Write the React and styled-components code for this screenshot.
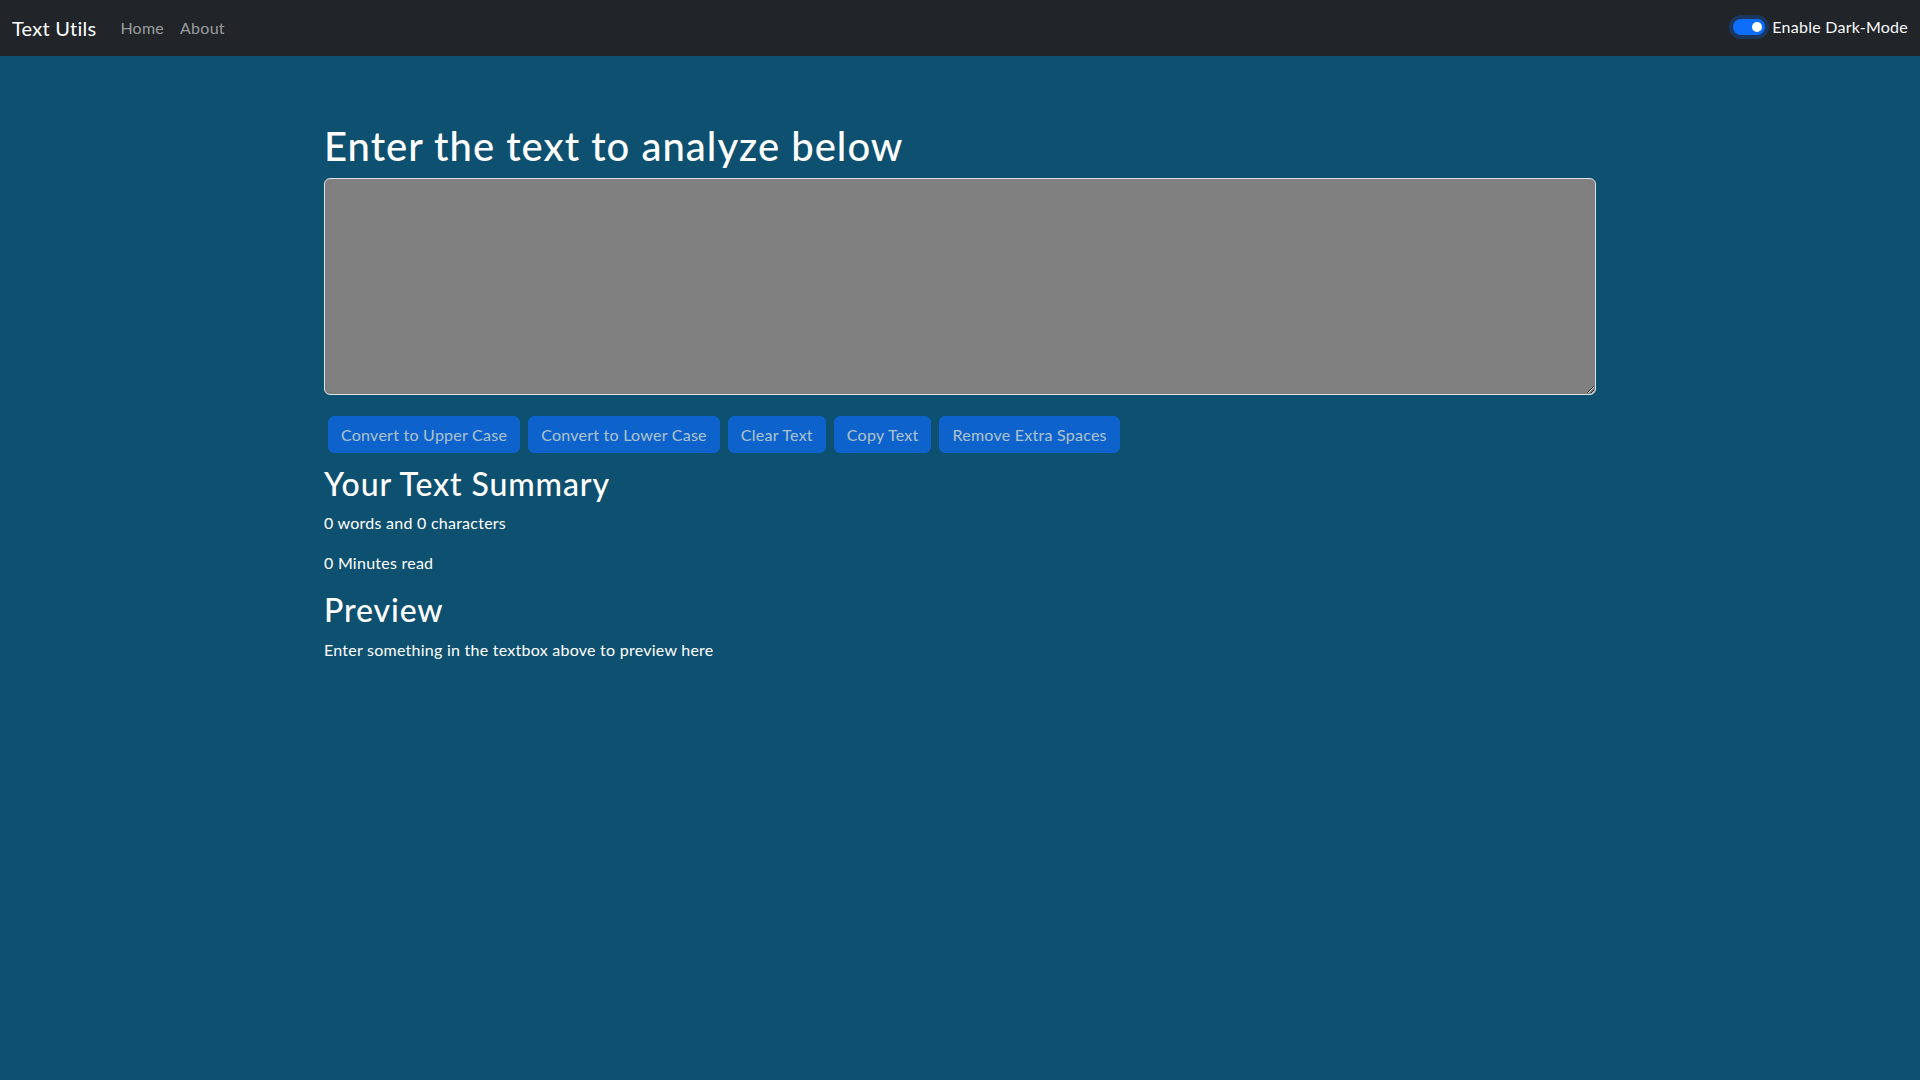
import React, { useState } from "react";
import styled, { createGlobalStyle } from "styled-components";

const GlobalStyle = createGlobalStyle`
  * { box-sizing: border-box; }
  body {
    margin: 0;
    background: #0e506f;
    color: #fff;
    font-family: Lato, "Noto Sans", sans-serif;
    font-size: 16px;
    line-height: 1.5;
    letter-spacing: 0.25px;
  }
`;

const Nav = styled.nav`
  height: 56px;
  background: #212529;
  display: flex;
  align-items: center;
  justify-content: space-between;
  padding: 0 12px;
`;

const Left = styled.div`
  display: flex;
  align-items: center;
`;

const Brand = styled.a`
  font-size: 20px;
  color: #fff;
  text-decoration: none;
  margin-right: 16px;
`;

const NavLink = styled.a`
  color: rgba(255, 255, 255, 0.55);
  text-decoration: none;
  padding: 8px;
`;

const Switch = styled.label`
  display: flex;
  align-items: center;
  gap: 7px;
  color: #f8f9fa;
  margin-bottom: 3px;
`;

const Track = styled.span`
  width: 32px;
  height: 16px;
  border-radius: 8px;
  background: #0d6efd;
  box-shadow: 0 0 0 4px rgba(13, 110, 253, 0.25);
  display: flex;
  align-items: center;
  justify-content: ${(p) => (p.on ? "flex-end" : "flex-start")};
  padding: 0 3px;
`;

const Knob = styled.span`
  width: 10px;
  height: 10px;
  border-radius: 50%;
  background: #fff;
`;

const Spacer = styled.div`
  height: 50px;
`;

const Container = styled.div`
  max-width: 1296px;
  margin: 16px auto;
  padding: 0 12px;
`;

const H1 = styled.h1`
  font-size: 40px;
  font-weight: 500;
  line-height: 1.2;
  letter-spacing: 1px;
  margin: 0 0 8px;
`;

const H2 = styled.h2`
  font-size: 32px;
  font-weight: 500;
  line-height: 1.2;
  letter-spacing: 0.9px;
  margin: 0 0 8px;
`;

const Area = styled.textarea`
  display: block;
  width: 100%;
  height: 217px;
  background: grey;
  color: #fff;
  border: 1px solid #dee2e6;
  border-radius: 6px;
  padding: 6px 12px;
  font: inherit;
  margin-bottom: 16px;
`;

const Buttons = styled.div`
  display: flex;
  flex-wrap: wrap;
  margin-bottom: -4px;
`;

const Button = styled.button`
  margin: 5px 4px 0;
  height: 37px;
  padding: 0 12px;
  background: #0d6efd;
  color: #fff;
  border: 1px solid #0d6efd;
  border-radius: 6px;
  font: inherit;
  letter-spacing: inherit;
  opacity: 0.65;
`;

const P = styled.p`
  margin: 0 0 16px;
`;

const actions = [
  "Convert to Upper Case",
  "Convert to Lower Case",
  "Clear Text",
  "Copy Text",
  "Remove Extra Spaces",
];

export default function App() {
  const [dark, setDark] = useState(true);
  return (
    <>
      <GlobalStyle />
      <Nav>
        <Left>
          <Brand href="#">Text Utils</Brand>
          <NavLink href="#">Home</NavLink>
          <NavLink href="#">About</NavLink>
        </Left>
        <Switch onClick={() => setDark(!dark)}>
          <Track on={dark ? 1 : 0}>
            <Knob />
          </Track>
          Enable Dark-Mode
        </Switch>
      </Nav>
      <Spacer />
      <Container>
        <H1>Enter the text to analyze below</H1>
        <Area />
        <Buttons>
          {actions.map((t) => (
            <Button key={t} disabled>
              {t}
            </Button>
          ))}
        </Buttons>
      </Container>
      <Container>
        <H2>Your Text Summary</H2>
        <P>0 words and 0 characters</P>
        <P>0 Minutes read</P>
        <H2>Preview</H2>
        <P>Enter something in the textbox above to preview here</P>
      </Container>
    </>
  );
}
